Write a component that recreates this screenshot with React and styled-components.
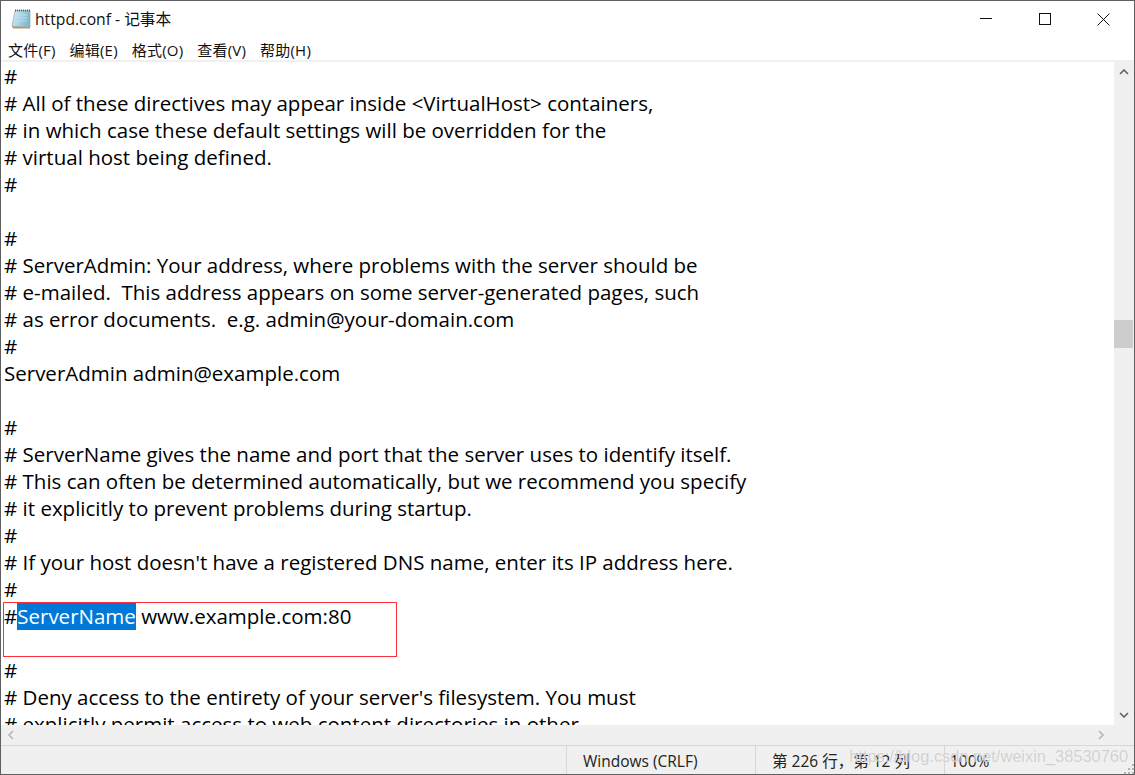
import styled, { createGlobalStyle } from "styled-components";

const GlobalStyle = createGlobalStyle`
  html, body { margin: 0; padding: 0; background: #fff; }
  * { box-sizing: border-box; }
`;

const textLines = [
  "#",
  "# All of these directives may appear inside <VirtualHost> containers,",
  "# in which case these default settings will be overridden for the",
  "# virtual host being defined.",
  "#",
  "",
  "#",
  "# ServerAdmin: Your address, where problems with the server should be",
  "# e-mailed.  This address appears on some server-generated pages, such",
  "# as error documents.  e.g. admin@your-domain.com",
  "#",
  "ServerAdmin admin@example.com",
  "",
  "#",
  "# ServerName gives the name and port that the server uses to identify itself.",
  "# This can often be determined automatically, but we recommend you specify",
  "# it explicitly to prevent problems during startup.",
  "#",
  "# If your host doesn't have a registered DNS name, enter its IP address here.",
  "#",
  "SELECTED",
  "",
  "#",
  "# Deny access to the entirety of your server's filesystem. You must",
  "# explicitly permit access to web content directories in other",
];

const menus = ["文件(F)", "编辑(E)", "格式(O)", "查看(V)", "帮助(H)"];

function NotepadIcon() {
  return (
    <svg width="20" height="20" viewBox="0 0 20 20">
      <defs>
        <linearGradient id="pad" x1="0" y1="0" x2="1" y2="0.3">
          <stop offset="0" stopColor="#d8edf5" />
          <stop offset="0.55" stopColor="#a9d5e6" />
          <stop offset="1" stopColor="#7fb9d0" />
        </linearGradient>
      </defs>
      <path d="M4 1.5 L19 1.5 L19 18 L1 17.5 Z" fill="url(#pad)" stroke="#8fa3ad" strokeWidth="0.7" />
      <path d="M1 17.5 L19 18 L19 19.5 L2 19.5 Z" fill="#b09a70" />
      <path d="M4 1.5 L19 1.5" stroke="#5c6870" strokeWidth="2" strokeDasharray="1 1" />
      <path d="M5 6H16M4.5 9H16M4 12H16" stroke="#c3e0ec" strokeWidth="0.7" />
    </svg>
  );
}

export default function App() {
  return (
    <>
      <GlobalStyle />
      <Window>
        <TitleBar>
          <TitleLeft>
            <NotepadIcon />
            <TitleText>httpd.conf - 记事本</TitleText>
          </TitleLeft>
          <WindowButtons>
            <WindowButton>
              <svg width="12" height="12" viewBox="0 0 12 12"><path d="M0 5.5H12" stroke="#111" fill="none" /></svg>
            </WindowButton>
            <WindowButton>
              <svg width="12" height="12" viewBox="0 0 12 12"><rect x="0.5" y="0.5" width="11" height="11" stroke="#111" fill="none" /></svg>
            </WindowButton>
            <WindowButton>
              <svg width="13" height="13" viewBox="0 0 13 13"><path d="M0.5 0.5L12.5 12.5M12.5 0.5L0.5 12.5" stroke="#111" fill="none" /></svg>
            </WindowButton>
          </WindowButtons>
        </TitleBar>
        <MenuBar>
          {menus.map((m) => (
            <MenuItem key={m}>{m}</MenuItem>
          ))}
        </MenuBar>
        <EditorRow>
          <TextArea>
            {textLines.map((line, i) =>
              line === "SELECTED" ? (
                <Line key={i}>
                  #<Selected>ServerName</Selected> www.example.com:80
                </Line>
              ) : (
                <Line key={i}>{line}</Line>
              )
            )}
            <RedBox />
          </TextArea>
          <VScroll>
            <Arrow>
              <svg width="10" height="6" viewBox="0 0 10 6"><path d="M1 5L5 1L9 5" stroke="#606060" strokeWidth="1.6" fill="none" /></svg>
            </Arrow>
            <Thumb />
            <Arrow>
              <svg width="10" height="6" viewBox="0 0 10 6"><path d="M1 1L5 5L9 1" stroke="#606060" strokeWidth="1.6" fill="none" /></svg>
            </Arrow>
          </VScroll>
        </EditorRow>
        <HScroll>
          <HArrow>
            <svg width="6" height="10" viewBox="0 0 6 10"><path d="M5 1L1 5L5 9" stroke="#b8b8b8" strokeWidth="1.6" fill="none" /></svg>
          </HArrow>
          <HArrow>
            <svg width="6" height="10" viewBox="0 0 6 10"><path d="M1 1L5 5L1 9" stroke="#b8b8b8" strokeWidth="1.6" fill="none" /></svg>
          </HArrow>
        </HScroll>
        <StatusBar>
          <StatusCell $width={189} $pad={16}>Windows (CRLF)</StatusCell>
          <StatusCell $width={189} $pad={16}>第 226 行，第 12 列</StatusCell>
          <StatusCell $width={188} $pad={5}>100%</StatusCell>
          <Watermark>https://blog.csdn.net/weixin_38530760</Watermark>
          <Grip>
            <svg width="10" height="10" viewBox="0 0 10 10">
              <path d="M8 0h2v2H8zM4 4h2v2H4zM8 4h2v2H8zM0 8h2v2H0zM4 8h2v2H4zM8 8h2v2H8z" fill="#b4b4b4" />
            </svg>
          </Grip>
        </StatusBar>
      </Window>
    </>
  );
}

const uiFont = `"Open Sans", "Noto Sans CJK SC", sans-serif`;

const Window = styled.div`
  width: 1135px;
  height: 775px;
  display: flex;
  flex-direction: column;
  position: relative;
  overflow: hidden;
  background: #fff;
  border: 1px solid #5f5f5f;
  font-family: ${uiFont};
`;

const TitleBar = styled.div`
  height: 36px;
  flex: none;
  display: flex;
  justify-content: space-between;
  padding-left: 10px;
`;

const TitleLeft = styled.div`
  display: flex;
  align-items: center;
  gap: 4px;
`;

const TitleText = styled.span`
  font-size: 15.7px;
  line-height: 36px;
  color: #111;
`;

const WindowButtons = styled.div`
  display: flex;
  padding-right: 1px;
`;

const WindowButton = styled.div`
  width: 59px;
  height: 36px;
  display: flex;
  align-items: center;
  justify-content: center;
`;

const MenuBar = styled.div`
  height: 25px;
  flex: none;
  display: flex;
  gap: 14px;
  padding: 3px 0 0 7px;
  align-items: flex-start;
  border-bottom: 2px solid #f0f0f0;
`;

const MenuItem = styled.span`
  font-size: 15px;
  letter-spacing: 0.2px;
  line-height: 20px;
  color: #111;
`;

const EditorRow = styled.div`
  flex: 1;
  min-height: 0;
  display: flex;
`;

const TextArea = styled.div`
  flex: 1;
  min-width: 0;
  position: relative;
  overflow: hidden;
  padding: 1px 0 0 3px;
  font-family: "Open Sans", sans-serif;
  font-size: 20.5px;
  color: #000;
`;

const Line = styled.div`
  height: 27px;
  line-height: 27px;
  white-space: pre;
`;

const Selected = styled.span`
  background: #0078d7;
  color: #fff;
`;

const RedBox = styled.div`
  position: absolute;
  left: 2px;
  top: 540px;
  width: 394px;
  height: 55px;
  border: 1px solid #ff2f3a;
  pointer-events: none;
`;

const VScroll = styled.div`
  width: 20px;
  flex: none;
  background: #f0f0f0;
  display: flex;
  flex-direction: column;
  justify-content: space-between;
`;

const Thumb = styled.div`
  width: 19px;
  height: 28px;
  background: #cdcdcd;
  margin-top: 238px;
  margin-bottom: auto;
`;

const Arrow = styled.div`
  width: 19px;
  height: 20px;
  flex: none;
  display: flex;
  align-items: center;
  justify-content: center;
`;

const HScroll = styled.div`
  height: 20px;
  flex: none;
  background: #f0f0f0;
  display: flex;
  justify-content: space-between;
  align-items: center;
  padding: 0 30px 0 7px;
`;

const HArrow = styled.div`
  display: flex;
`;

const StatusBar = styled.div`
  height: 29px;
  flex: none;
  position: relative;
  background: #f0f0f0;
  border-top: 1px solid #d7d7d7;
  display: flex;
  padding-left: 565px;
`;

const StatusCell = styled.div`
  width: ${(p) => p.$width}px;
  padding-left: ${(p) => p.$pad}px;
  border-left: 1px solid #d7d7d7;
  font-size: 15.5px;
  line-height: 30px;
  color: #222;
`;

const Watermark = styled.div`
  position: absolute;
  right: 6px;
  top: -4px;
  font-family: "Liberation Sans", sans-serif;
  font-size: 16.4px;
  line-height: 28px;
  color: rgba(200, 200, 200, 0.85);
  text-shadow: 0 0 1px rgba(255, 255, 255, 0.9);
`;

const Grip = styled.div`
  position: absolute;
  right: 0;
  bottom: 0;
  display: flex;
`;
